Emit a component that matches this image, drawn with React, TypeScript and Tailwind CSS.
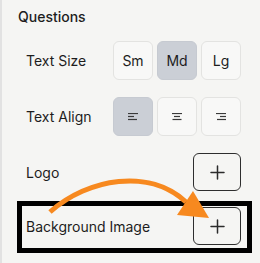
import { useState } from 'react';

const sizes = ['Sm', 'Md', 'Lg'];

function AlignIcon({ kind }: { kind: 'left' | 'center' | 'right' }) {
  const mid = kind === 'left' ? 'M0 3.5h6' : kind === 'center' ? 'M2 3.5h6' : 'M4 3.5h6';
  const bot = kind === 'left' ? 'M0 6.5h9' : kind === 'center' ? 'M0.5 6.5h9' : 'M1 6.5h9';
  return (
    <svg width="10" height="8" viewBox="0 0 10 8" fill="none" stroke="#3a3a3a" strokeWidth="1.2">
      <path d="M0 0.5h10" />
      <path d={mid} />
      <path d={bot} />
    </svg>
  );
}

function PlusButton() {
  return (
    <button className="w-[48px] h-[38px] flex items-center justify-center rounded-md border border-[#2e2e2e]">
      <svg width="15" height="15" viewBox="0 0 15 15" fill="none" stroke="#2b2b2b" strokeWidth="1.5" strokeLinecap="round">
        <path d="M7.5 1v13M1 7.5h13" />
      </svg>
    </button>
  );
}

export default function App() {
  const [size, setSize] = useState('Md');
  const [align, setAlign] = useState<'left' | 'center' | 'right'>('left');

  const segClass = (active: boolean) =>
    `w-[40px] h-[39px] flex items-center justify-center rounded-md border text-[14px] font-normal text-[#1d1d1d] ${
      active ? 'bg-[#cbcfd6] border-[#c6cad1]' : 'bg-[#f8f8f7] border-[#e3e3e1]'
    }`;

  return (
    <div
      className="relative w-[260px] h-[263px] overflow-hidden bg-[#f5f5f3] border-l-2 border-[#e2e2e2] text-[#1d1d1d]"
      style={{ fontFamily: 'Inter, "Noto Sans", sans-serif' }}
    >
      <div className="pl-4 pt-[7px] text-[14px] leading-5 font-medium">Questions</div>

      <div className="mt-[14px] pl-6 pr-[19px] flex flex-col gap-[17px]">
        <div className="flex items-center justify-between">
          <span className="text-[14px]">Text Size</span>
          <div className="flex gap-[4px]">
            {sizes.map((s) => (
              <button key={s} onClick={() => setSize(s)} className={segClass(size === s)}>
                {s}
              </button>
            ))}
          </div>
        </div>

        <div className="flex items-center justify-between">
          <span className="text-[14px]">Text Align</span>
          <div className="flex gap-[4px]">
            {(['left', 'center', 'right'] as const).map((a) => (
              <button key={a} onClick={() => setAlign(a)} className={segClass(align === a)}>
                <AlignIcon kind={a} />
              </button>
            ))}
          </div>
        </div>

        <div className="flex items-center justify-between">
          <span className="text-[14px]">Logo</span>
          <PlusButton />
        </div>

        <div className="flex items-center justify-between -mt-px">
          <span className="text-[14px]">Background Image</span>
          <PlusButton />
        </div>
      </div>

      {/* annotation overlay */}
      <div className="absolute left-[15px] top-[201px] w-[235px] h-[52px] border-[5px] border-black pointer-events-none" />
      <svg className="absolute left-[-2px] top-0 pointer-events-none" width="260" height="263" viewBox="0 0 260 263" fill="none">
        <path d="M50 212 C 88 178, 150 168, 186 202" stroke="#f7891f" strokeWidth="5" />
        <path d="M177 215 L193 191 L209 218 Z" fill="#f7891f" />
      </svg>
    </div>
  );
}
